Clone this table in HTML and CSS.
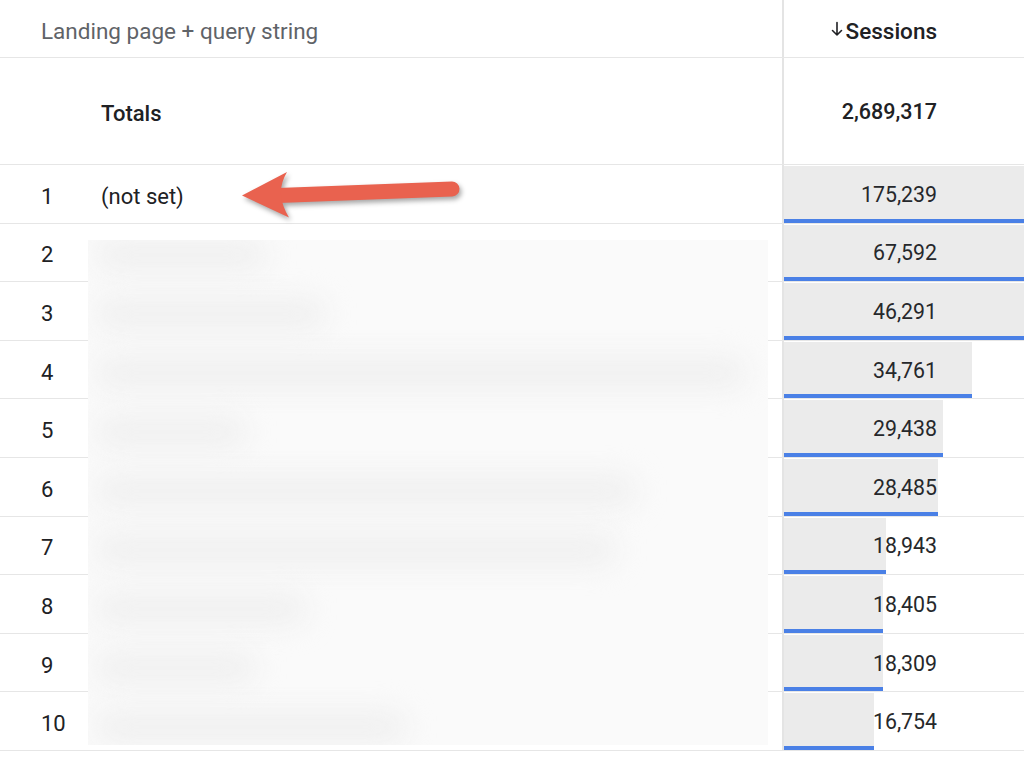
FILE: index.html
```html
<!DOCTYPE html>
<html lang="en">
<head>
<meta charset="utf-8">
<title>Landing page report</title>
<link rel="stylesheet" href="styles.css">
</head>
<body>
<div class="table">
  <div class="row head">
    <div class="cell idx"></div>
    <div class="cell name head-label">Landing page + query string</div>
    <div class="cell metric head-metric">
      <svg class="sort-icon" width="12" height="16" viewBox="0 0 12 16" aria-hidden="true">
        <path d="M6 1.5 V14 M1.5 9.5 L6 14 L10.5 9.5" fill="none" stroke="#202124" stroke-width="1.6" stroke-linecap="round" stroke-linejoin="round"/>
      </svg>
      <span>Sessions</span>
    </div>
  </div>
  <div class="row totals">
    <div class="cell idx"></div>
    <div class="cell name strong">Totals</div>
    <div class="cell metric"><span class="num strong">2,689,317</span></div>
  </div>

  <div class="row data">
    <div class="cell idx">1</div>
    <div class="cell name">(not set)</div>
    <div class="cell metric"><div class="bar" style="width:948px"></div><span class="num">175,239</span></div>
  </div>
  <div class="row data">
    <div class="cell idx">2</div>
    <div class="cell name"></div>
    <div class="cell metric"><div class="bar" style="width:366px"></div><span class="num">67,592</span></div>
  </div>
  <div class="row data">
    <div class="cell idx">3</div>
    <div class="cell name"></div>
    <div class="cell metric"><div class="bar" style="width:250px"></div><span class="num">46,291</span></div>
  </div>
  <div class="row data">
    <div class="cell idx">4</div>
    <div class="cell name"></div>
    <div class="cell metric"><div class="bar" style="width:188px"></div><span class="num">34,761</span></div>
  </div>
  <div class="row data">
    <div class="cell idx">5</div>
    <div class="cell name"></div>
    <div class="cell metric"><div class="bar" style="width:159px"></div><span class="num">29,438</span></div>
  </div>
  <div class="row data">
    <div class="cell idx">6</div>
    <div class="cell name"></div>
    <div class="cell metric"><div class="bar" style="width:154px"></div><span class="num">28,485</span></div>
  </div>
  <div class="row data">
    <div class="cell idx">7</div>
    <div class="cell name"></div>
    <div class="cell metric"><div class="bar" style="width:102px"></div><span class="num">18,943</span></div>
  </div>
  <div class="row data">
    <div class="cell idx">8</div>
    <div class="cell name"></div>
    <div class="cell metric"><div class="bar" style="width:99px"></div><span class="num">18,405</span></div>
  </div>
  <div class="row data">
    <div class="cell idx">9</div>
    <div class="cell name"></div>
    <div class="cell metric"><div class="bar" style="width:99px"></div><span class="num">18,309</span></div>
  </div>
  <div class="row data">
    <div class="cell idx">10</div>
    <div class="cell name"></div>
    <div class="cell metric"><div class="bar" style="width:90px"></div><span class="num">16,754</span></div>
  </div>

  <div class="redacted" aria-hidden="true">
    <div class="blob" style="width:170px"></div>
    <div class="blob" style="width:230px"></div>
    <div class="blob" style="width:650px"></div>
    <div class="blob" style="width:150px"></div>
    <div class="blob" style="width:540px"></div>
    <div class="blob" style="width:520px"></div>
    <div class="blob" style="width:210px"></div>
    <div class="blob" style="width:160px"></div>
    <div class="blob" style="width:310px"></div>
  </div>

  <svg class="callout" width="240" height="70" viewBox="0 0 240 70" aria-hidden="true">
    <g class="callout-shape">
      <line x1="48" y1="35.5" x2="222" y2="29" stroke="#e9624f" stroke-width="15" stroke-linecap="round"/>
      <path d="M12 35.5 L57 12 Q50 24 51 35 Q52 46 59 57.5 Z" fill="#e9624f"/>
    </g>
  </svg>
</div>
</body>
</html>
```

FILE: styles.css
```css
* { box-sizing: border-box; }

html, body {
  margin: 0;
  padding: 0;
  background: #ffffff;
}

body {
  font-family: Roboto, "Liberation Sans", Arial, sans-serif;
  color: #202124;
  font-size: 22px;
  width: 1024px;
  overflow: hidden;
}

.table {
  position: relative;
  width: 1024px;
}

.row {
  display: grid;
  grid-template-columns: 101px 681px 242px;
  border-bottom: 1px solid #e6e6e6;
}

.cell {
  display: flex;
  align-items: center;
  min-width: 0;
}

.idx {
  padding-left: 41px;
}

.metric {
  border-left: 2px solid #e4e4e4;
  justify-content: flex-end;
  padding-right: 87px;
}

/* header */
.head { height: 58px; }
.head .cell { padding-top: 4px; }
.head-label {
  margin-left: -60px;
  color: #5f6368;
  font-weight: 400;
  font-size: 22.5px;
}
.head-metric {
  font-weight: 500;
  font-size: 22.5px;
  gap: 3px;
}
.sort-icon { margin-top: -4px; }

/* totals */
.totals { height: 107px; }
.totals .cell { padding-top: 4px; }
.strong { font-weight: 500; }
.totals .num { margin-top: -4px; font-size: 21.5px; }

/* data rows */
.data { height: 58.6px; }
.data .cell { padding-top: 5px; }
.data .metric {
  display: grid;
  grid-template-columns: minmax(0, 1fr);
  padding-right: 0;
  padding-top: 0;
  align-items: stretch;
  overflow: hidden;
}
.data .metric > * { grid-area: 1 / 1; }
.bar {
  max-width: 100%;
  margin-top: 1px;
  background: #ebebeb;
  border-bottom: 4px solid #4a80e6;
}
.data .num {
  justify-self: end;
  align-self: center;
  padding-right: 87px;
  margin-top: 1px;
  font-size: 21.3px;
  color: #26282b;
  position: relative;
}

/* redacted (blurred) area */
.redacted {
  position: absolute;
  left: 88px;
  top: 240px;
  width: 680px;
  height: 505px;
  background: #fafafa;
  overflow: hidden;
  display: flex;
  flex-direction: column;
  gap: 29px;
  padding: 0 0 0 8px;
}
.blob {
  height: 30px;
  border-radius: 15px;
  background: #efefef;
  filter: blur(14px);
  flex-shrink: 0;
}

/* callout arrow */
.callout {
  position: absolute;
  left: 230px;
  top: 160px;
}
.callout-shape {
  filter: drop-shadow(2px 3px 2.5px rgba(0, 0, 0, 0.35));
}
```
